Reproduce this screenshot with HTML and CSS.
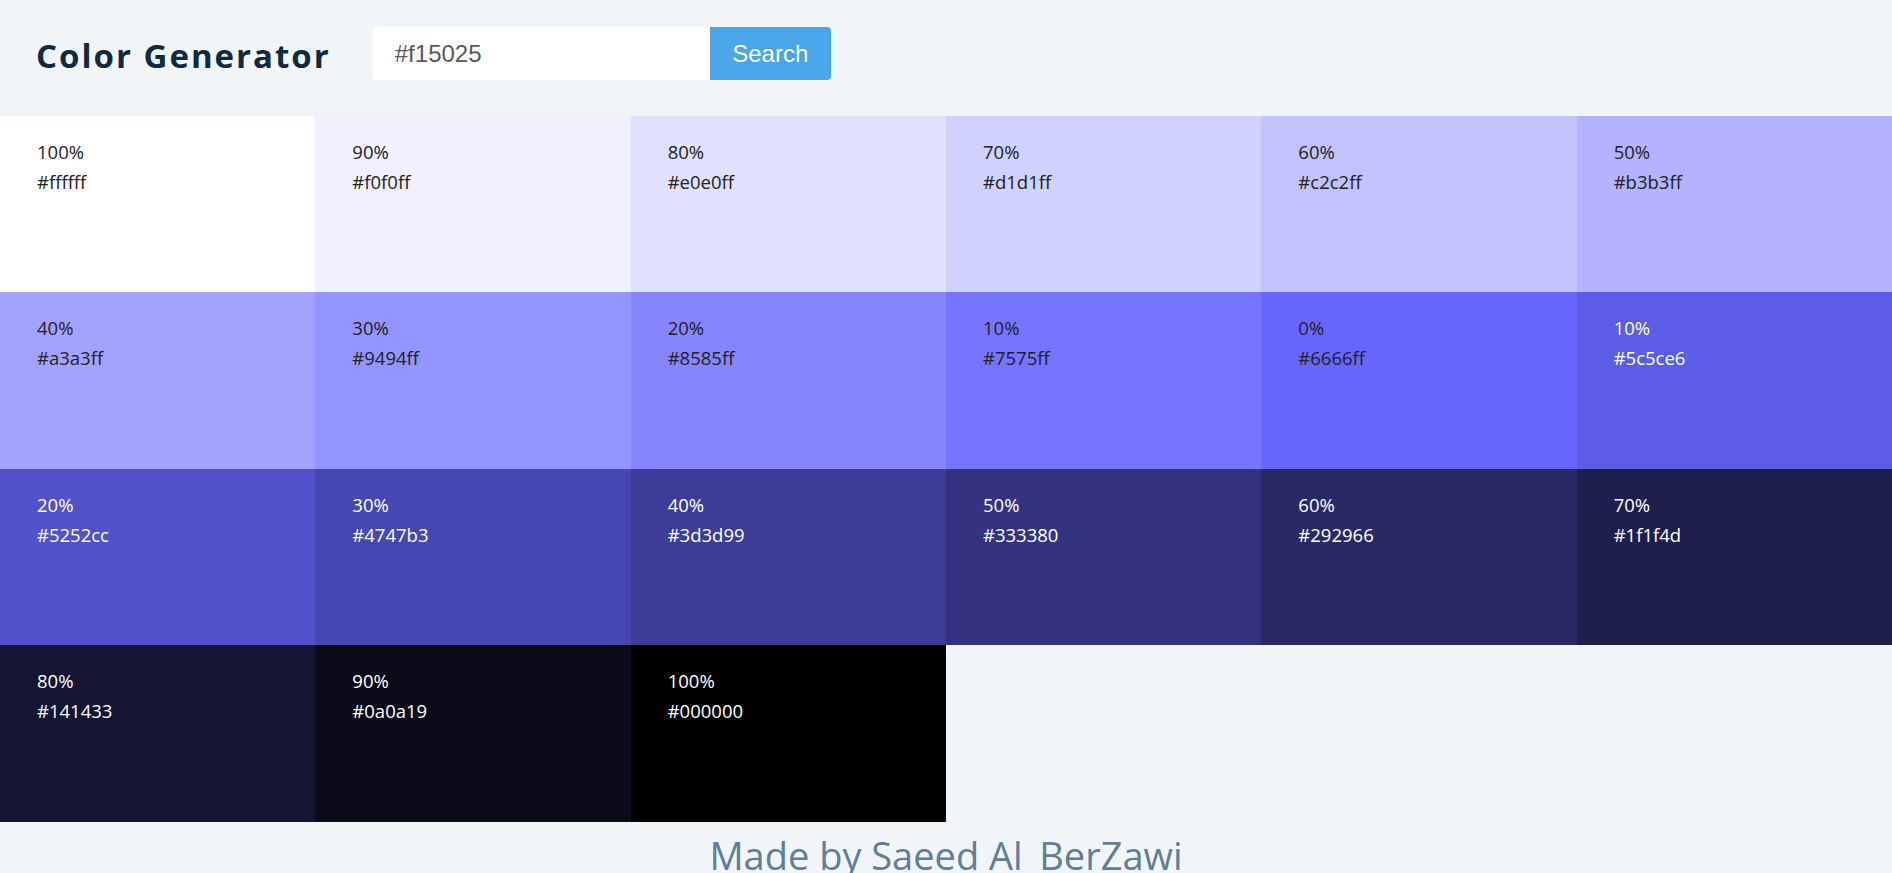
FILE: index.html
```html
<!DOCTYPE html>
<html lang="en">
<head>
<meta charset="utf-8">
<title>Color Generator</title>
<link rel="stylesheet" href="styles.css">
</head>
<body>
<section class="container">
  <h3 class="title">Color Generator</h3>
  <form class="search-form">
    <input class="search-input" type="text" value="#f15025">
    <button class="search-btn" type="button">Search</button>
  </form>
</section>
<section class="colors">
  <article class="color" style="background:#ffffff"><p class="percent">100%</p><p class="value">#ffffff</p></article>
  <article class="color" style="background:#f0f0ff"><p class="percent">90%</p><p class="value">#f0f0ff</p></article>
  <article class="color" style="background:#e0e0ff"><p class="percent">80%</p><p class="value">#e0e0ff</p></article>
  <article class="color" style="background:#d1d1ff"><p class="percent">70%</p><p class="value">#d1d1ff</p></article>
  <article class="color" style="background:#c2c2ff"><p class="percent">60%</p><p class="value">#c2c2ff</p></article>
  <article class="color" style="background:#b3b3ff"><p class="percent">50%</p><p class="value">#b3b3ff</p></article>
  <article class="color" style="background:#a3a3ff"><p class="percent">40%</p><p class="value">#a3a3ff</p></article>
  <article class="color" style="background:#9494ff"><p class="percent">30%</p><p class="value">#9494ff</p></article>
  <article class="color" style="background:#8585ff"><p class="percent">20%</p><p class="value">#8585ff</p></article>
  <article class="color" style="background:#7575ff"><p class="percent">10%</p><p class="value">#7575ff</p></article>
  <article class="color" style="background:#6666ff"><p class="percent">0%</p><p class="value">#6666ff</p></article>
  <article class="color color-light" style="background:#5c5ce6"><p class="percent">10%</p><p class="value">#5c5ce6</p></article>
  <article class="color color-light" style="background:#5252cc"><p class="percent">20%</p><p class="value">#5252cc</p></article>
  <article class="color color-light" style="background:#4747b3"><p class="percent">30%</p><p class="value">#4747b3</p></article>
  <article class="color color-light" style="background:#3d3d99"><p class="percent">40%</p><p class="value">#3d3d99</p></article>
  <article class="color color-light" style="background:#333380"><p class="percent">50%</p><p class="value">#333380</p></article>
  <article class="color color-light" style="background:#292966"><p class="percent">60%</p><p class="value">#292966</p></article>
  <article class="color color-light" style="background:#1f1f4d"><p class="percent">70%</p><p class="value">#1f1f4d</p></article>
  <article class="color color-light" style="background:#141433"><p class="percent">80%</p><p class="value">#141433</p></article>
  <article class="color color-light" style="background:#0a0a19"><p class="percent">90%</p><p class="value">#0a0a19</p></article>
  <article class="color color-light" style="background:#000000"><p class="percent">100%</p><p class="value">#000000</p></article>
</section>
<footer class="footer">Made by Saeed Al_BerZawi</footer>
</body>
</html>
```

FILE: styles.css
```css
html {
  scrollbar-width: none;
}
html::-webkit-scrollbar {
  display: none;
}
* {
  box-sizing: border-box;
}
body {
  margin: 0;
  background: #f1f5f8;
  color: #102a42;
  font-family: "Open Sans", "Noto Sans", sans-serif;
}
.container {
  display: flex;
  align-items: center;
  height: 116px;
  padding: 0 0 9px 36px;
}
.title {
  margin: 0 42px 0 0;
  font-size: 33px;
  font-weight: 700;
  letter-spacing: 2px;
  line-height: 1.25;
  color: #102a42;
  position: relative;
  top: 2px;
}
.search-form {
  display: flex;
  height: 53px;
}
.search-input {
  width: 337px;
  height: 53px;
  border: none;
  outline: none;
  padding: 0 22px;
  font-family: "Liberation Sans", Arial, sans-serif;
  font-size: 24px;
  color: #5a5a5a;
  background: #fff;
  border-radius: 4px 0 0 4px;
}
.search-btn {
  width: 121px;
  height: 53px;
  border: none;
  padding: 0;
  background: #49a6e9;
  color: #fff;
  font-family: "Liberation Sans", Arial, sans-serif;
  font-size: 24px;
  border-radius: 0 4px 4px 0;
}
.colors {
  display: grid;
  grid-template-columns: repeat(6, 1fr);
  grid-auto-rows: 176.4px;
}
.color {
  padding: 21px 37px;
  font-size: 18.5px;
  line-height: 30px;
  color: #222;
}
.color p {
  margin: 0;
}
.color-light {
  color: #fff;
}
.footer {
  text-align: center;
  font-size: 38px;
  line-height: 52px;
  margin-top: 7px;
  color: #617d98;
}
```
